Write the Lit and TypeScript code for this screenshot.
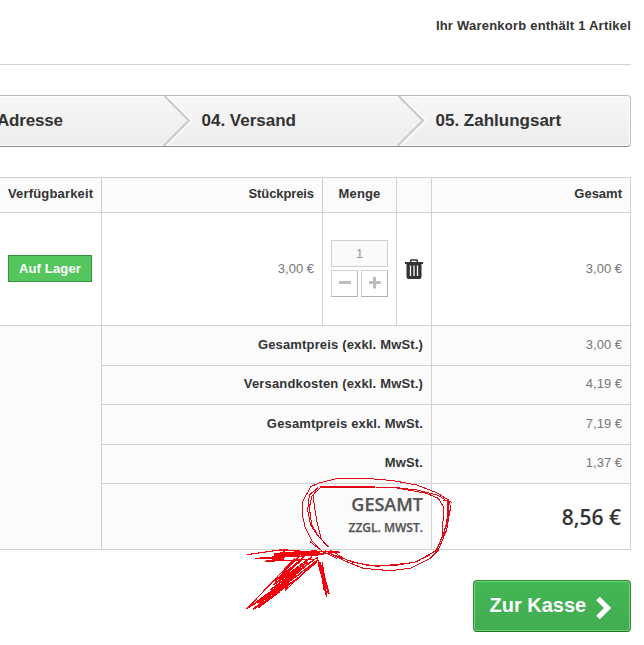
import { LitElement, html, css, svg } from "lit";
import { customElement, property } from "lit/decorators.js";

@customElement("order-steps")
class OrderSteps extends LitElement {
  static styles = css`
    :host { display: block; }
    .bar {
      display: grid; grid-template-columns: 177px 234px 1fr; align-items: center;
      height: 52px; box-sizing: border-box; margin-left: -6px; position: relative;
      border: 1px solid #bdbdbd; border-bottom-color: #8c8c8c; border-radius: 4px;
      background: linear-gradient(#f7f7f7, #ededed);
      box-shadow: inset 0 0 0 1px #fff;
      font: bold 17px/24px "Liberation Sans", Arial, sans-serif; color: #333;
    }
    .step { padding-left: 29.5px; position: relative; height: 50px; line-height: 49px; white-space: nowrap; }
    .first { padding-left: 2px; letter-spacing: -0.2px; }
    .name { display: inline-block; }
    .chev { position: absolute; left: -9px; top: 0; width: 30px; height: 50px; }
  `;
  render() {
    const chev = html`<svg class="chev" viewBox="0 0 30 50" fill="none">
      <path d="M4 0L28.500 24.500L3 50" stroke="#fff" stroke-width="2"/>
      <path d="M1.500 0L26 24.500L0.500 50" stroke="#cacaca" stroke-width="2.200"/></svg>`;
    return html`<div class="bar">
      <div class="step first"><span class="name">Adresse</span></div>
      <div class="step">${chev}<span class="name">04. Versand</span></div>
      <div class="step">${chev}<span class="name">05. Zahlungsart</span></div>
    </div>`;
  }
}

@customElement("quantity-input")
class QuantityInput extends LitElement {
  @property({ type: Number }) value = 1;
  static styles = css`
    :host { display: grid; grid-template-columns: 27px 27px; gap: 3px; font: 13px/26px "Liberation Sans", Arial, sans-serif; }
    .field { grid-column: 1 / 3; height: 27px; box-sizing: border-box; border: 1px solid #cfcfcf; background: #fafafa; color: #999; text-align: center; }
    .btn { height: 27px; box-sizing: border-box; border: 1px solid #d2d2d2; border-right-color: #b5b5b5; border-bottom-color: #b0b0b0; display: block; }
    .btn svg { display: block; width: 25px; height: 25px; }
  `;
  render() {
    const mark = (d: string) => html`<div class="btn"><svg viewBox="0 0 25 25"><path d=${d} fill="#bcbcbc"/></svg></div>`;
    return html`<div class="field">${this.value}</div>
      ${mark("M7 10H19V13H7Z")}${mark("M7 10H11V6H14V10H18.500V13H14V17.500H11V13H7Z")}`;
  }
}

@customElement("cart-table")
class CartTable extends LitElement {
  static styles = css`
    :host { display: block; }
    .grid {
      display: grid; grid-template-columns: 102px 221px 74px 35px 199px;
      grid-template-rows: 35px 113px 40px 39px 40px 39px 66px;
      border-top: 1px solid #d2d2d2;
      font: 13px/18px "Liberation Sans", Arial, sans-serif; color: #777;
    }
    .cell {
      box-sizing: border-box; border-right: 1px solid #d2d2d2; border-bottom: 1px solid #d2d2d2;
      padding: 0 8px; display: flex; align-items: center; justify-content: flex-end; white-space: nowrap;
    }
    .head, .sum { font-weight: bold; color: #333; }
    .sum { letter-spacing: 0.16px; }
    .head { padding-bottom: 3px; }
    .wide { letter-spacing: 0.17px; }
    .tight { letter-spacing: -0.1px; }
    .head, .sum, .shade { background: #fbfbfb; }
    .sum, .shade, .product { padding-bottom: 2px; }
    .center { justify-content: center; }
    .left { justify-content: flex-start; }
    .side { grid-column: 1; grid-row: 3 / 8; }
    .sum { grid-column: 2 / 5; }
    .total { flex-direction: column; align-items: flex-end; justify-content: flex-start; padding-top: 7px; font: 600 18px/26px "Open Sans", sans-serif; color: #555; letter-spacing: 0; -webkit-text-stroke: 0.25px #555; }
    .small { font-size: 12px; line-height: 21px; }
    .grand { font: 600 21px/28px "Open Sans", sans-serif; color: #333; padding-right: 9px; }
    .stock { border: 1px solid #36943e; background: #55c65e; color: #fff; font-weight: bold; line-height: 25px; width: 82px; text-align: center; letter-spacing: 0.15px; }
    .bin { width: 18px; height: 20px; flex: none; }
  `;
  render() {
    const rows = [
      ["Gesamtpreis (exkl. MwSt.)", "3,00 €"],
      ["Versandkosten (exkl. MwSt.)", "4,19 €"],
      ["Gesamtpreis exkl. MwSt.", "7,19 €"],
      ["MwSt.", "1,37 €"],
    ];
    return html`<div class="grid">
      <div class="cell head left wide"><span>Verfügbarkeit</span></div>
      <div class="cell head tight"><span>Stückpreis</span></div>
      <div class="cell head center wide"><span>Menge</span></div>
      <div class="cell head"></div>
      <div class="cell head"><span>Gesamt</span></div>
      <div class="cell left product"><span class="stock">Auf Lager</span></div>
      <div class="cell"><span>3,00 €</span></div>
      <div class="cell center product"><quantity-input .value=${1}></quantity-input></div>
      <div class="cell center"><svg class="bin" viewBox="0 0 18 20">
        <path d="M5 3V1.500Q5 .2 6.500 .2H11.500Q13 .2 13 1.500V3H18V5H16.500V18Q16.500 20 14.500 20H3.500Q1.500 20 1.500 18V5H0V3ZM6.500 3H11.500V1.700H6.500Z" fill="#333" fill-rule="evenodd"/>
        <path d="M5.500 6.500V17M9 6.500V17M12.500 6.500V17" stroke="#fff" stroke-width="1.300"/></svg></div>
      <div class="cell"><span>3,00 €</span></div>
      <div class="cell side shade"></div>
      ${rows.map(([label, value]) => html`<div class="cell sum"><span>${label}</span></div><div class="cell shade"><span>${value}</span></div>`)}
      <div class="cell sum total"><span>GESAMT</span><span class="small">ZZGL. MWST.</span></div>
      <div class="cell grand"><span>8,56 €</span></div>
    </div>`;
  }
}

@customElement("app-root")
class AppRoot extends LitElement {
  static styles = css`
    :host { display: block; position: relative; width: 644px; height: 645px; overflow: hidden; background: #fff; font-family: "Liberation Sans", Arial, sans-serif; }
    .page { width: 631px; }
    .count { height: 65px; box-sizing: border-box; border-bottom: 1px solid #d2d2d2; margin-bottom: 30px; padding-top: 17px; text-align: right; font-weight: bold; font-size: 13px; line-height: 18px; color: #333; letter-spacing: 0.22px; }
    .steps { margin-bottom: 30px; }
    .actions { display: flex; justify-content: flex-end; margin-top: 30px; }
    .checkout {
      width: 158px; height: 52px; box-sizing: border-box; border: 1px solid #2f8f3a; border-bottom-color: #20752b; border-radius: 4px;
      box-shadow: inset 0 0 0 1px #74d578; background: linear-gradient(#43b754, #42ac52);
      display: flex; align-items: center; gap: 9px; padding: 0 0 2px 15.5px; color: #fff; font: bold 20px/24px "Liberation Sans", Arial, sans-serif; white-space: nowrap;
    }
    .arrow { width: 17px; height: 24px; margin-top: 5px; flex: none; }
    .marker { position: absolute; left: 230px; top: 470px; width: 240px; height: 150px; pointer-events: none; }
  `;
  render() {
    const strokes = [
      "M270 38L242 50L218 95L217 135L225 170L245 212L275 242L320 265",
      "M262 52L250 75L253 110L262 160L273 205L290 228",
      "M265 52L238 75L233 120L242 165L262 195L296 232",
      "M275 50L246 78L238 112L245 165L265 198L285 220",
      "M285 242L350 275L400 295L480 302L540 295L600 265L625 240L650 180L662 110L655 90L620 68L560 45L490 32L410 25L318 26L270 38",
      "M300 240L350 270L420 288L500 286L560 275L618 242L638 200L640 110L625 85L590 70L500 54L436 51",
      "M440 51L500 53L560 60L625 76L658 98L648 170L620 242",
      "M300 250L370 277L440 289L550 278L600 255",
      "M640 90L666 97M655 88L657 125L640 200M651 90L653 150L642 185",
      "M240 215L285 250L330 247",
    ];
    const arrow = [
      "M50 254L150 240L262 246L328 244L258 256L80 265L200 255L285 250M75 265L150 266L105 274L250 268M160 238L172 240L150 250L260 244",
      "M262 262L50 417L195 265M205 262L135 335L225 258L150 330L245 260L160 340L225 290L72 415L205 325L65 407L165 345L262 270L165 362L180 330L205 315",
      "M195 270L150 318L215 270L130 345L235 275L120 360L248 272L100 385L200 315L85 413L150 365L70 418L190 335L262 275",
      "M262 262L290 382L278 300L298 373L270 275L282 360M265 270L295 370L282 310L276 275L290 378",
    ];
    return html`
      <div class="page">
        <div class="count"><span>Ihr Warenkorb enthält 1 Artikel</span></div>
        <order-steps class="steps"></order-steps>
        <cart-table></cart-table>
        <div class="actions"><div class="checkout"><span>Zur Kasse</span>
          <svg class="arrow" viewBox="0 0 17 24"><path d="M3 2.500L12.500 12L3 21.500" fill="none" stroke="#fff" stroke-width="5.200"/></svg></div></div>
      </div>
      <svg class="marker" viewBox="0 0 720 450" fill="none" stroke="#e30613" shape-rendering="crispEdges">
        ${strokes.map((d) => svg`<path d=${d} stroke-width="3"/>`)}
        <path d="M270 50H436" stroke-width="6"/>
        ${arrow.map((d) => svg`<path d=${d} stroke-width="3.500" stroke="#f5000c"/>`)}
        <g stroke="#f5000c">
          <path d="M160 253L262 247" stroke-width="13"/>
          <path d="M133 259H162" stroke-width="20"/>
          <path d="M85 397L165 340" stroke-width="12"/>
          <path d="M268 285L286 345" stroke-width="9"/>
        </g>
      </svg>`;
  }
}
